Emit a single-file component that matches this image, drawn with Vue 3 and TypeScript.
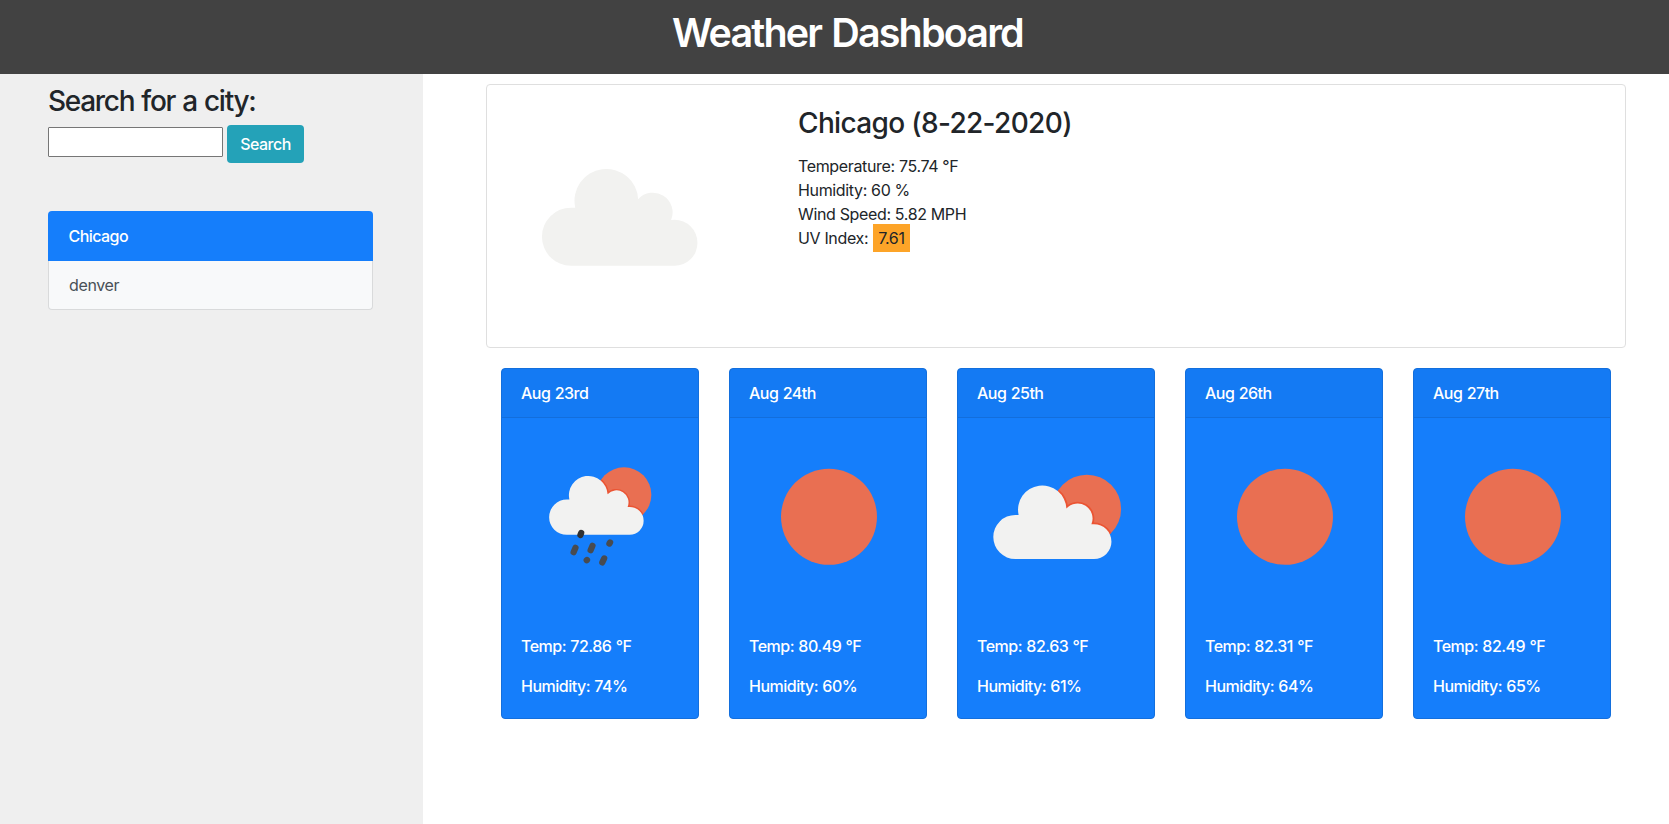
<script setup lang="ts">
import { ref } from 'vue'

type Sky = 'rain' | 'clear' | 'partly'

interface Forecast {
  date: string
  sky: Sky
  temp: string
  humidity: string
}

const query = ref('')
const cities = ['Chicago', 'denver']
const activeCity = ref('Chicago')

const forecast: Forecast[] = [
  { date: 'Aug 23rd', sky: 'rain', temp: '72.86', humidity: '74' },
  { date: 'Aug 24th', sky: 'clear', temp: '80.49', humidity: '60' },
  { date: 'Aug 25th', sky: 'partly', temp: '82.63', humidity: '61' },
  { date: 'Aug 26th', sky: 'clear', temp: '82.31', humidity: '64' },
  { date: 'Aug 27th', sky: 'clear', temp: '82.49', humidity: '65' },
]

const cloud =
  'M38 121.4A22.1 22.1 0 0 1 38 77.2L41.2 77.2A24.2 24.2 0 1 1 89 70.8A15 15 0 0 1 114 86.6L116.6 86.5A17.45 17.45 0 0 1 116.6 121.4Z'
</script>

<template>
  <div class="page">
    <header class="banner">
      <h1>Weather Dashboard</h1>
    </header>
    <div class="layout">
      <aside class="sidebar">
        <h3 class="search-title">Search for a city:</h3>
        <form class="search" @submit.prevent>
          <input v-model="query" type="text" aria-label="City" />
          <button type="submit">Search</button>
        </form>
        <ul class="cities">
          <li
            v-for="city in cities"
            :key="city"
            :class="{ active: city === activeCity }"
            @click="activeCity = city"
          >
            {{ city }}
          </li>
        </ul>
      </aside>
      <main class="content">
        <section class="current">
          <svg class="current-icon" viewBox="0 0 158 158">
            <path :d="cloud" fill="#f2f2f0" />
          </svg>
          <div class="current-info">
            <h3>Chicago (8-22-2020)</h3>
            <p>Temperature: 75.74 °F</p>
            <p>Humidity: 60 %</p>
            <p>Wind Speed: 5.82 MPH</p>
            <p>UV Index: <span class="uv">7.61</span></p>
          </div>
        </section>
        <section class="forecast">
          <article v-for="day in forecast" :key="day.date" class="day">
            <div class="day-head">{{ day.date }}</div>
            <div class="day-body">
              <svg class="day-icon" viewBox="0 0 158 158">
                <circle v-if="day.sky === 'clear'" cx="79" cy="78.8" r="48" fill="#e96f52" />
                <g v-else :transform="day.sky === 'rain' ? 'translate(14.4 -.3) scale(.8)' : 'translate(-.6 -.3)'">
                  <clipPath :id="'sun-' + day.sky">
                    <circle cx="109.5" cy="71.2" r="34.2" />
                  </clipPath>
                  <circle cx="109.5" cy="71.2" r="34.2" fill="#e96f52" />
                  <path :d="cloud" fill="none" stroke="#eb5433" stroke-width="3.6" :clip-path="`url(#sun-${day.sky})`" />
                  <path :d="cloud" fill="#f2f2f1" />
                </g>
                <g v-if="day.sky === 'rain'" stroke="#484b50" stroke-width="6.2" stroke-linecap="round">
                  <path d="M59.2 95l-.8 2" stroke="#303133" />
                  <path d="M53.5 109.8l-1.9 4.4M70.5 107.8l-1.9 4.4M88.1 104.4l-.7 1.2M65 122l-.3.3M82.2 120.4l-1.9 4" />
                </g>
              </svg>
              <p>Temp: {{ day.temp }} °F</p>
              <p>Humidity: {{ day.humidity }}%</p>
            </div>
          </article>
        </section>
      </main>
    </div>
  </div>
</template>

<style>
body {
  margin: 0;
  background: #fff;
}
</style>

<style scoped>
* {
  box-sizing: border-box;
}
.page {
  display: flex;
  flex-direction: column;
  height: 824px;
  overflow: hidden;
  font: 400 16px/24px Inter, 'Liberation Sans', sans-serif;
  letter-spacing: -0.35px;
  color: #212529;
}
h1,
h3,
p,
ul {
  margin: 0;
  padding: 0;
}
.banner {
  height: 74px;
  padding-top: 9px;
  padding-left: 26px;
  background: #424242;
  color: #fff;
  text-align: center;
}
h1 {
  font-size: 39.5px;
  font-weight: 600;
  line-height: 48px;
  letter-spacing: -1.85px;
  word-spacing: 2px;
}
.layout {
  display: flex;
  flex: 1;
}
.sidebar {
  flex: none;
  width: 423px;
  padding: 10px 50px 0 48px;
  background: #efefef;
}
h3 {
  font-size: 28px;
  font-weight: 500;
  line-height: 34px;
}
.search-title {
  letter-spacing: -1.3px;
  word-spacing: 1px;
}
.search {
  display: flex;
  align-items: flex-start;
  gap: 4px;
  margin-top: 7px;
}
.search input {
  width: 175px;
  height: 30px;
  margin-top: 2px;
  border: 1px solid #767676;
  border-radius: 1px;
  background: #fff;
}
.search button {
  width: 77px;
  height: 38px;
  padding: 0;
  border: 0;
  border-radius: 4px;
  background: #24a2b8;
  color: #fff;
  font: inherit;
  font-weight: 500;
  letter-spacing: -0.5px;
}
.cities {
  margin-top: 48px;
  list-style: none;
}
.cities li {
  height: 49px;
  padding: 12px 20px;
  border: 1px solid #d9dadb;
  border-top: 0;
  border-radius: 0 0 4px 4px;
  background: #f8f9fa;
  color: #495057;
}
.cities li.active {
  height: 50px;
  padding-top: 13px;
  padding-left: 20.5px;
  border: 0;
  border-radius: 4px 4px 0 0;
  background: #157efb;
  color: #fff;
  font-weight: 500;
  letter-spacing: -0.55px;
}
.content {
  flex: 1;
  min-width: 0;
  padding: 10px 43px 0 63px;
}
.current {
  display: flex;
  height: 264px;
  border: 1px solid #dfdfdf;
  border-radius: 4px;
}
.current-icon {
  width: 208px;
  height: 208px;
  margin: 21px 69px 0 34px;
}
.current-info {
  padding-top: 21px;
}
.current-info h3 {
  margin-bottom: 14px;
  letter-spacing: -0.65px;
}
.uv {
  display: inline-block;
  margin: -2px 0 -2px 1px;
  padding: 2px 5px;
  background: #fda428;
}
.forecast {
  display: grid;
  grid-template-columns: repeat(5, minmax(0, 1fr));
  gap: 30px;
  padding: 20px 15px 0;
}
.day {
  height: 351px;
  border: 1px solid #136fdd;
  border-radius: 4px;
  background: #157efb;
  color: #fff;
  font-weight: 500;
  letter-spacing: -0.5px;
  word-spacing: 0.5px;
}
.day-head {
  height: 49px;
  padding: 12px 19px;
  border-bottom: 1px solid #126edc;
  background: rgba(0, 0, 0, 0.03);
}
.day-body {
  padding: 20px 19px;
}
.day-icon {
  display: block;
  width: 158px;
  height: 158px;
  margin: 0 0 38px 1px;
}
.day-body p + p {
  margin-top: 16px;
}
</style>
